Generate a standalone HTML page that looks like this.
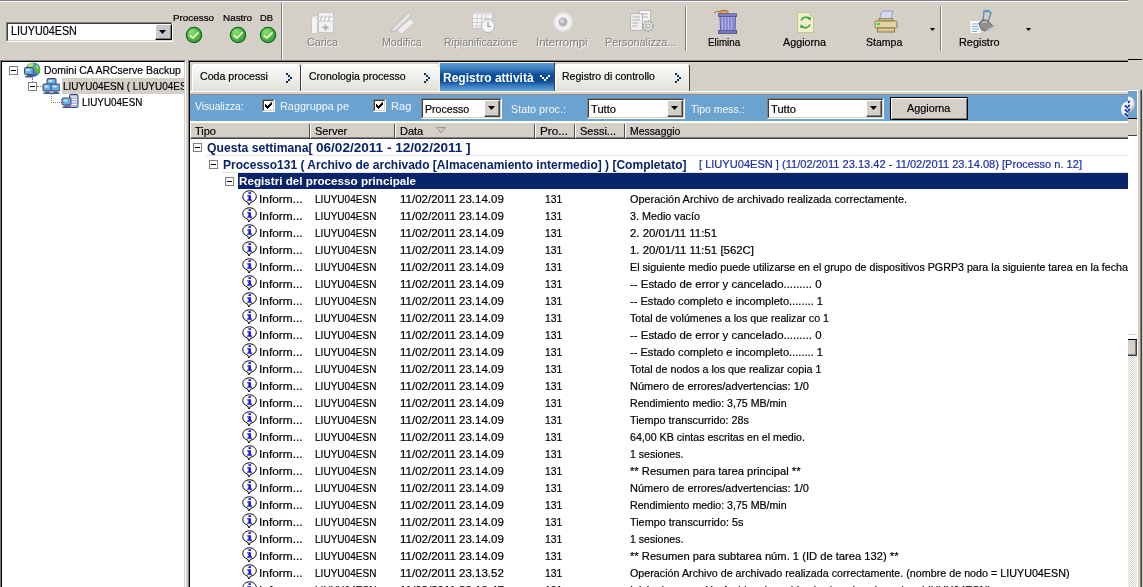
<!DOCTYPE html>
<html><head><meta charset="utf-8"><style>
html,body{margin:0;padding:0;}
body{width:1143px;height:587px;overflow:hidden;position:relative;background:#D4D0C8;font-family:'Liberation Sans', sans-serif;white-space:nowrap;}
div{box-sizing:border-box;}
.dis{color:#808080;text-shadow:1px 1px 0 #fff;}
.n{-webkit-text-stroke-width:0.2px;}
</style></head><body><div style="position:absolute;left:0;top:0;width:1143px;height:587px;will-change:transform">
<div style="position:absolute;left:0px;top:0px;width:1128px;height:1px;background:#808080"></div>
<div style="position:absolute;left:0px;top:1px;width:1128px;height:1px;background:#fff"></div>
<div style="position:absolute;left:6px;top:22px;width:167px;height:20px;border-top:1px solid #808080;border-left:1px solid #808080;border-right:1px solid #fff;border-bottom:1px solid #fff"></div>
<div style="position:absolute;left:7px;top:23px;width:165px;height:18px;border-top:1px solid #404040;border-left:1px solid #404040;border-right:1px solid #D4D0C8;border-bottom:1px solid #D4D0C8;background:#fff"></div>
<div class="n" style="position:absolute;left:11px;top:25px;font-size:12px;line-height:12px;font-weight:normal;color:#000;transform:scaleX(0.8981);transform-origin:0 0;">LIUYU04ESN</div>
<div style="position:absolute;left:155px;top:24px;width:17px;height:16px;background:#C8C8C8;border-top:1px solid #fff;border-left:1px solid #fff;border-right:1px solid #000;border-bottom:1px solid #000;box-shadow:inset -1px -1px 0 #808080"></div>
<svg style="position:absolute;left:159px;top:30px" width="8" height="5"><path d="M0 0H7L3.5 4Z" fill="#000"/></svg>
<div class="n" style="position:absolute;left:173px;top:14px;font-size:9px;line-height:9px;font-weight:normal;color:#000;transform:scaleX(1.0950);transform-origin:0 0;">Processo</div>
<div class="n" style="position:absolute;left:223px;top:14px;font-size:9px;line-height:9px;font-weight:normal;color:#000;transform:scaleX(1.0974);transform-origin:0 0;">Nastro</div>
<div class="n" style="position:absolute;left:260px;top:14px;font-size:9px;line-height:9px;font-weight:normal;color:#000;transform:scaleX(1.0421);transform-origin:0 0;">DB</div>
<svg style="position:absolute;left:185px;top:26px" width="18" height="18" viewBox="0 0 18 18">
<defs><radialGradient id="g194" cx="35%" cy="30%" r="75%"><stop offset="0" stop-color="#8EE070"/><stop offset="0.6" stop-color="#58B848"/><stop offset="1" stop-color="#3A9A38"/></radialGradient></defs>
<circle cx="9" cy="9" r="7.6" fill="url(#g194)" stroke="#0E6A24" stroke-width="1.3"/>
<path d="M5.2 9.6L8 12L13 6.8" fill="none" stroke="#F4FFD8" stroke-width="1.7" stroke-linecap="round" stroke-linejoin="round"/></svg>
<svg style="position:absolute;left:229px;top:26px" width="18" height="18" viewBox="0 0 18 18">
<defs><radialGradient id="g238" cx="35%" cy="30%" r="75%"><stop offset="0" stop-color="#8EE070"/><stop offset="0.6" stop-color="#58B848"/><stop offset="1" stop-color="#3A9A38"/></radialGradient></defs>
<circle cx="9" cy="9" r="7.6" fill="url(#g238)" stroke="#0E6A24" stroke-width="1.3"/>
<path d="M5.2 9.6L8 12L13 6.8" fill="none" stroke="#F4FFD8" stroke-width="1.7" stroke-linecap="round" stroke-linejoin="round"/></svg>
<svg style="position:absolute;left:259px;top:26px" width="18" height="18" viewBox="0 0 18 18">
<defs><radialGradient id="g268" cx="35%" cy="30%" r="75%"><stop offset="0" stop-color="#8EE070"/><stop offset="0.6" stop-color="#58B848"/><stop offset="1" stop-color="#3A9A38"/></radialGradient></defs>
<circle cx="9" cy="9" r="7.6" fill="url(#g268)" stroke="#0E6A24" stroke-width="1.3"/>
<path d="M5.2 9.6L8 12L13 6.8" fill="none" stroke="#F4FFD8" stroke-width="1.7" stroke-linecap="round" stroke-linejoin="round"/></svg>
<div style="position:absolute;left:281px;top:2px;width:1px;height:58px;background:#808080"></div>
<div style="position:absolute;left:282px;top:2px;width:1px;height:58px;background:#fff"></div>
<div style="position:absolute;left:685px;top:6px;width:1px;height:45px;background:#808080"></div>
<div style="position:absolute;left:686px;top:6px;width:1px;height:45px;background:#fff"></div>
<div style="position:absolute;left:940px;top:6px;width:1px;height:45px;background:#808080"></div>
<div style="position:absolute;left:941px;top:6px;width:1px;height:45px;background:#fff"></div>
<div class="dis" style="position:absolute;left:307px;top:37px;font-size:11px;line-height:11px;font-weight:normal;transform:scaleX(0.9741);transform-origin:0 0;">Carica</div>
<div class="dis" style="position:absolute;left:382px;top:37px;font-size:11px;line-height:11px;font-weight:normal;transform:scaleX(0.9683);transform-origin:0 0;">Modifica</div>
<div class="dis" style="position:absolute;left:444px;top:37px;font-size:11px;line-height:11px;font-weight:normal;transform:scaleX(0.9573);transform-origin:0 0;">Ripianificazione</div>
<div class="dis" style="position:absolute;left:536px;top:37px;font-size:11px;line-height:11px;font-weight:normal;transform:scaleX(1.0426);transform-origin:0 0;">Interrompi</div>
<div class="dis" style="position:absolute;left:605px;top:37px;font-size:11px;line-height:11px;font-weight:normal;transform:scaleX(0.9908);transform-origin:0 0;">Personalizza...</div>
<div class="n" style="position:absolute;left:708px;top:37px;font-size:11px;line-height:11px;font-weight:normal;color:#000;transform:scaleX(0.8923);transform-origin:0 0;">Elimina</div>
<div class="n" style="position:absolute;left:783px;top:37px;font-size:11px;line-height:11px;font-weight:normal;color:#000;transform:scaleX(0.9780);transform-origin:0 0;">Aggiorna</div>
<div class="n" style="position:absolute;left:866px;top:37px;font-size:11px;line-height:11px;font-weight:normal;color:#000;transform:scaleX(0.9561);transform-origin:0 0;">Stampa</div>
<div class="n" style="position:absolute;left:959px;top:37px;font-size:11px;line-height:11px;font-weight:normal;color:#000;transform:scaleX(0.9908);transform-origin:0 0;">Registro</div>
<svg style="position:absolute;left:930px;top:28px" width="6" height="4"><path d="M0 0H5L2.5 3Z" fill="#000"/></svg>
<svg style="position:absolute;left:1026px;top:28px" width="6" height="4"><path d="M0 0H5L2.5 3Z" fill="#000"/></svg>
<svg style="position:absolute;left:310px;top:11px" width="26" height="24" viewBox="0 0 26 24">
<rect x="1.5" y="5" width="6" height="17.5" rx="1" fill="#F4F4F4" stroke="#C8C8C8"/>
<rect x="1.5" y="5" width="6" height="2" fill="#E0E0E0"/>
<rect x="8.5" y="1.5" width="15" height="20" fill="#F0F0F0" stroke="#C8C8C8"/>
<rect x="8.5" y="6" width="15" height="4" fill="#fff" stroke="#C8C8C8"/>
<path d="M10 10L12 6M14 10L16 6M18 10L20 6" stroke="#C0C0C0" stroke-width="1.3"/>
<path d="M15.5 13.5V19.5M12.5 16.5H18.5" stroke="#B0B0B0" stroke-width="1.8"/></svg>
<svg style="position:absolute;left:390px;top:10px" width="27" height="24" viewBox="0 0 27 24">
<path d="M2 19L17 3.5Q19 1.5 20.5 3L21 3.5Q22 5 20.5 6.5L5 21.5L1.5 22Z" fill="#E4E4E4" stroke="#B4B4B4"/>
<path d="M7.5 20L20 8.5L24.5 12.5L12 24" fill="#EDEDED" stroke="#C8C8C8"/></svg>
<svg style="position:absolute;left:471px;top:9px" width="25" height="25" viewBox="0 0 25 25">
<rect x="1.5" y="2.5" width="20" height="17" fill="#F4F4F4" stroke="#C4C4C4"/>
<rect x="1.5" y="2.5" width="20" height="3" fill="#D8D8D8"/>
<path d="M1.5 9.5H21.5M1.5 13.5H21.5M1.5 17H21.5M6 5.5V19.5M10.5 5.5V19.5M15 5.5V19.5" stroke="#D0D0D0"/>
<circle cx="17" cy="17" r="6.5" fill="#F6F6F6" stroke="#B8B8B8"/>
<path d="M17 13V17.5H20" fill="none" stroke="#909090" stroke-width="1.2"/></svg>
<svg style="position:absolute;left:552px;top:11px" width="22" height="22" viewBox="0 0 22 22">
<circle cx="11" cy="11" r="10" fill="#E6E6E6"/><circle cx="11" cy="11" r="9" fill="#F2F2F2" stroke="#DADADA"/>
<circle cx="11" cy="11" r="4.5" fill="#B8B8B8"/><circle cx="10" cy="10" r="2" fill="#D8D8D8"/></svg>
<svg style="position:absolute;left:629px;top:9px" width="27" height="25" viewBox="0 0 27 25">
<rect x="10.5" y="1.5" width="11" height="18" fill="#F4F4F4" stroke="#C0C0C0"/>
<rect x="1.5" y="4.5" width="12" height="17" fill="#EEEEEE" stroke="#B8B8B8"/>
<path d="M3.5 8H11M3.5 11H11M3.5 14H9M3.5 17H8M13 5H19M13 8H19" stroke="#B0B0B0"/>
<circle cx="19" cy="17" r="5" fill="#E0E0E0" stroke="#A8A8A8" stroke-width="2" stroke-dasharray="2 1.2"/>
<circle cx="19" cy="17" r="2" fill="#F4F4F4" stroke="#A0A0A0"/></svg>
<svg style="position:absolute;left:712px;top:9px" width="28" height="26" viewBox="0 0 28 26">
<path d="M2 4Q4 2 8 2.5" fill="none" stroke="#A07040" stroke-width="1"/>
<ellipse cx="12" cy="3.5" rx="4.2" ry="2.2" fill="#E0A050" stroke="#A06828"/>
<rect x="6.5" y="4.8" width="18" height="2.6" fill="#8888C8" stroke="#5A5A98"/>
<path d="M8 7.5H23.5L23 22H8.5Z" fill="#9898E0" stroke="#5A5A98"/>
<path d="M11 9V21M14 9V21M17 9V21M20 9V21" stroke="#C8C8F4" stroke-width="1"/>
<path d="M11.8 9V21M14.8 9V21M17.8 9V21M20.8 9V21" stroke="#6464A8" stroke-width="0.8"/>
<rect x="6.5" y="21.5" width="18" height="3" fill="#7878B8" stroke="#5A5A98"/></svg>
<svg style="position:absolute;left:797px;top:12px" width="18" height="21" viewBox="0 0 18 21">
<path d="M0.5 0.5H13L16.5 4V20.5H0.5Z" fill="#F2F0C8" stroke="#C8C498"/>
<path d="M13 0.5V4H16.5" fill="#E4E0B0" stroke="#C8C498"/>
<path d="M4 8.5A5 5 0 0 1 12.5 7" fill="none" stroke="#3AAA4A" stroke-width="1.8"/>
<path d="M10.5 5L14 5.5L13 9Z" fill="#2A9A3A"/>
<path d="M13 12.5A5 5 0 0 1 4.5 14" fill="none" stroke="#3AAA4A" stroke-width="1.8"/>
<path d="M6.5 16L3 15.5L4 12Z" fill="#2A9A3A"/></svg>
<svg style="position:absolute;left:874px;top:10px" width="24" height="23" viewBox="0 0 24 23">
<path d="M5.5 11L7 3Q8 1 10 1H19L17 9Z" fill="#D8D8F0" stroke="#8C8CA8" stroke-width="0.8"/>
<path d="M5 8.5H19V11H5Z" fill="#C8B888" stroke="#8C7850" stroke-width="0.8"/>
<rect x="1" y="11" width="22" height="7" rx="1" fill="#E0D4A0" stroke="#8C7850"/>
<rect x="3" y="13" width="3" height="2" fill="#40D040"/>
<rect x="3.5" y="18" width="17" height="4" fill="#D8C890" stroke="#8C7850"/></svg>
<svg style="position:absolute;left:970px;top:9px" width="26" height="25" viewBox="0 0 26 25">
<rect x="0.5" y="12" width="10" height="12" fill="#fff"/>
<path d="M2 15H9M2 17.5H8M2 20H9M2 22.5H7" stroke="#70A8E0" stroke-width="1"/>
<path d="M14 2L18 1.5L21 4L17 15L13 13Z" fill="none" stroke="#6E8CA8" stroke-width="1.5"/>
<path d="M15.5 2.5L19.5 2" stroke="#3A9AF0" stroke-width="2"/>
<path d="M9 14Q12 10 16 11L20 14L23 17L15 22Q11 21 10 18Z" fill="#909090" stroke="#505050" stroke-width="0.8"/>
<path d="M12 14Q14 12 17 13" stroke="#D0D0D0" stroke-width="1.2" fill="none"/>
<path d="M16 21L24 16L25 17.5L17 22Z" fill="#B8B8B8"/></svg>
<div style="position:absolute;left:0px;top:60px;width:186px;height:540px;background:#fff;border-top:1px solid #808080;border-left:1px solid #808080;border-right:1px solid #fff"></div>
<div style="position:absolute;left:1px;top:61px;width:184px;height:540px;border-top:1px solid #000;border-left:1px solid #000;border-right:1px solid #D4D0C8"></div>
<div style="position:absolute;left:9px;top:66px;width:9px;height:9px;border:1px solid #808080;background:#fff"></div>
<div style="position:absolute;left:11px;top:70px;width:5px;height:1px;background:#000"></div>
<div style="position:absolute;left:28px;top:82px;width:9px;height:9px;border:1px solid #808080;background:#fff"></div>
<div style="position:absolute;left:30px;top:86px;width:5px;height:1px;background:#000"></div>
<div style="position:absolute;left:32px;top:78px;width:1px;height:4px;border-left:1px dotted #808080"></div>
<div style="position:absolute;left:37px;top:86px;width:6px;height:1px;border-top:1px dotted #808080"></div>
<div style="position:absolute;left:51px;top:94px;width:1px;height:9px;border-left:1px dotted #808080"></div>
<div style="position:absolute;left:51px;top:102px;width:11px;height:1px;border-top:1px dotted #808080"></div>
<div style="position:absolute;left:62px;top:78px;width:122px;height:16px;background:#D4D0C8"></div>
<svg style="position:absolute;left:23px;top:61px" width="18" height="18" viewBox="0 0 18 18">
<defs><radialGradient id="glb" cx="45%" cy="40%" r="65%"><stop offset="0" stop-color="#6ABCF0"/><stop offset="0.7" stop-color="#2A78C8"/><stop offset="1" stop-color="#164C98"/></radialGradient></defs>
<circle cx="10" cy="8.7" r="7.3" fill="url(#glb)"/>
<path d="M4.5 4Q7 1.3 10.5 1.6Q11.5 3.5 9.5 5.5Q8 6.5 5 6.5Z" fill="#A8E060"/>
<path d="M12.5 2.5Q16.5 4.5 17 9Q16.5 12.5 14 14Q13 11 12 9.5Q11.5 6 12.5 2.5Z" fill="#58B838"/>
<path d="M13.5 4.5Q15 6 14.5 8" stroke="#B8F080" stroke-width="1.2" fill="none"/>
<rect x="1.5" y="6.5" width="9" height="7" rx="1" fill="#8A96C0" stroke="#3C4A7C"/><rect x="3" y="8" width="6" height="4" fill="#52B8F0"/><rect x="3" y="8" width="4" height="2" fill="#B8ECFF"/><path d="M4 14H8V15H10V16.5H2V15H4Z" fill="#4A5888"/></svg>
<svg style="position:absolute;left:42px;top:77px" width="18" height="18" viewBox="0 0 18 18"><rect x="5.0" y="1.5" width="9" height="7" rx="1" fill="#8A96C0" stroke="#3C4A7C"/><rect x="6.5" y="3" width="6" height="4" fill="#52B8F0"/><rect x="6.5" y="3" width="4" height="2" fill="#B8ECFF"/><path d="M7.5 9H11.5V10H13.5V11.5H5.5V10H7.5Z" fill="#4A5888"/><rect x="1.0" y="7.0" width="9" height="7" rx="1" fill="#8A96C0" stroke="#3C4A7C"/><rect x="2.5" y="8.5" width="6" height="4" fill="#52B8F0"/><rect x="2.5" y="8.5" width="4" height="2" fill="#B8ECFF"/><path d="M3.5 14.5H7.5V15.5H9.5V17.0H1.5V15.5H3.5Z" fill="#4A5888"/><rect x="9.0" y="7.0" width="9" height="7" rx="1" fill="#8A96C0" stroke="#3C4A7C"/><rect x="10.5" y="8.5" width="6" height="4" fill="#52B8F0"/><rect x="10.5" y="8.5" width="4" height="2" fill="#B8ECFF"/><path d="M11.5 14.5H15.5V15.5H17.5V17.0H9.5V15.5H11.5Z" fill="#4A5888"/></svg>
<svg style="position:absolute;left:61px;top:94px" width="18" height="16" viewBox="0 0 18 16">
<rect x="8.5" y="0.5" width="8.5" height="13" rx="1" fill="#A8B4D8" stroke="#3C4A7C"/>
<path d="M10 3H16M10 5.5H16M10 8H16M10 10.5H16" stroke="#fff" stroke-width="1.2"/>
<rect x="1.0" y="4.0" width="9" height="7" rx="1" fill="#8A96C0" stroke="#3C4A7C"/><rect x="2.5" y="5.5" width="6" height="4" fill="#52B8F0"/><rect x="2.5" y="5.5" width="4" height="2" fill="#B8ECFF"/><path d="M3.5 11.5H7.5V12.5H9.5V14.0H1.5V12.5H3.5Z" fill="#4A5888"/></svg>
<div class="n" style="position:absolute;left:44px;top:65px;font-size:11px;line-height:11px;font-weight:normal;color:#000;transform:scaleX(0.9478);transform-origin:0 0;">Domini CA ARCserve Backup</div>
<div style="position:absolute;left:0;top:0;width:184px;height:587px;overflow:hidden">
<div class="n" style="position:absolute;left:63px;top:81px;font-size:11px;line-height:11px;font-weight:normal;color:#000;transform:scaleX(0.9067);transform-origin:0 0;">LIUYU04ESN ( LIUYU04ESN )</div>
</div>
<div class="n" style="position:absolute;left:82px;top:97px;font-size:11px;line-height:11px;font-weight:normal;color:#000;transform:scaleX(0.8979);transform-origin:0 0;">LIUYU04ESN</div>
<div style="position:absolute;left:188px;top:60px;width:940px;height:540px;border-top:1px solid #808080;border-left:1px solid #808080"></div>
<div style="position:absolute;left:189px;top:61px;width:939px;height:540px;border-top:1px solid #000;border-left:1px solid #000"></div>
<div style="position:absolute;left:192px;top:64px;width:109px;height:28px;background:linear-gradient(#FAFAF8,#F2F1EE 40%,#E2DFD8);border-top:1px solid #fff;border-left:1px solid #fff;border-right:1px solid #404040;border-radius:3px 3px 0 0"></div>
<div class="n" style="position:absolute;left:200px;top:71px;font-size:11px;line-height:11px;font-weight:normal;color:#000;transform:scaleX(0.9664);transform-origin:0 0;">Coda processi</div>
<svg style="position:absolute;left:286px;top:73px" width="6" height="10" shape-rendering="crispEdges"><path d="M0 0h2v2h-2zM2 2h2v2h-2zM4 4h2v2h-2zM2 6h2v2h-2zM0 8h2v2h-2z" fill="#0A3060"/></svg>
<div style="position:absolute;left:301px;top:64px;width:139px;height:28px;background:linear-gradient(#FAFAF8,#F2F1EE 40%,#E2DFD8);border-top:1px solid #fff;border-left:1px solid #fff;border-right:1px solid #404040;border-radius:3px 3px 0 0"></div>
<div class="n" style="position:absolute;left:309px;top:71px;font-size:11px;line-height:11px;font-weight:normal;color:#000;transform:scaleX(0.9570);transform-origin:0 0;">Cronologia processo</div>
<svg style="position:absolute;left:424px;top:73px" width="6" height="10" shape-rendering="crispEdges"><path d="M0 0h2v2h-2zM2 2h2v2h-2zM4 4h2v2h-2zM2 6h2v2h-2zM0 8h2v2h-2z" fill="#0A3060"/></svg>
<div style="position:absolute;left:555px;top:64px;width:135px;height:28px;background:linear-gradient(#FAFAF8,#F2F1EE 40%,#E2DFD8);border-top:1px solid #fff;border-left:1px solid #fff;border-right:1px solid #404040;border-radius:3px 3px 0 0"></div>
<div class="n" style="position:absolute;left:562px;top:71px;font-size:11px;line-height:11px;font-weight:normal;color:#000;transform:scaleX(0.9562);transform-origin:0 0;">Registro di controllo</div>
<svg style="position:absolute;left:675px;top:73px" width="6" height="10" shape-rendering="crispEdges"><path d="M0 0h2v2h-2zM2 2h2v2h-2zM4 4h2v2h-2zM2 6h2v2h-2zM0 8h2v2h-2z" fill="#0A3060"/></svg>
<div style="position:absolute;left:439px;top:62px;width:116px;height:30px;background:linear-gradient(#5A9AD6 0%,#3C7FC0 20%,#0B4E98 40%,#0A4A92 62%,#3A80C4 80%,#6AA8DC 100%);border-right:1px solid #404040;border-left:1px solid #F4F4F4;border-top:1px solid #F4F4F4"></div>
<div style="position:absolute;left:443px;top:72px;font-size:12px;line-height:12px;font-weight:bold;color:#fff;transform:scaleX(0.9990);transform-origin:0 0;">Registro attività</div>
<svg style="position:absolute;left:540px;top:75px" width="10" height="6" shape-rendering="crispEdges"><path d="M0 0h2v2h-2zM2 2h2v2h-2zM4 4h2v2h-2zM6 2h2v2h-2zM8 0h2v2h-2z" fill="#fff"/></svg>
<div style="position:absolute;left:190px;top:91px;width:938px;height:1px;background:#fff"></div>
<div style="position:absolute;left:190px;top:94px;width:938px;height:1px;background:#8C8C8C"></div>
<div style="position:absolute;left:190px;top:95px;width:938px;height:26px;background:#6BA3D0"></div>
<div style="position:absolute;left:195px;top:101px;font-size:11px;line-height:11px;font-weight:normal;color:#F4F8FC;transform:scaleX(0.9282);transform-origin:0 0;">Visualizza:</div>
<div style="position:absolute;left:262px;top:99px;width:13px;height:13px;background:#fff;border-top:1px solid #808080;border-left:1px solid #808080;border-right:1px solid #fff;border-bottom:1px solid #fff"></div>
<div style="position:absolute;left:263px;top:100px;width:11px;height:11px;border-top:1px solid #404040;border-left:1px solid #404040;border-right:1px solid #D4D0C8;border-bottom:1px solid #D4D0C8"></div>
<svg style="position:absolute;left:265px;top:102px" width="7" height="7" shape-rendering="crispEdges"><path d="M6 0h1v1h-1zM5 1h2v1h-2zM0 2h1v1h-1zM4 2h3v1h-3zM0 3h2v1h-2zM3 3h3v1h-3zM0 4h5v1h-5zM1 5h3v1h-3zM2 6h1v1h-1z" fill="#000"/></svg>
<div style="position:absolute;left:280px;top:101px;font-size:11px;line-height:11px;font-weight:normal;color:#F4F8FC;transform:scaleX(0.9893);transform-origin:0 0;">Raggruppa pe</div>
<div style="position:absolute;left:373px;top:99px;width:13px;height:13px;background:#fff;border-top:1px solid #808080;border-left:1px solid #808080;border-right:1px solid #fff;border-bottom:1px solid #fff"></div>
<div style="position:absolute;left:374px;top:100px;width:11px;height:11px;border-top:1px solid #404040;border-left:1px solid #404040;border-right:1px solid #D4D0C8;border-bottom:1px solid #D4D0C8"></div>
<svg style="position:absolute;left:376px;top:102px" width="7" height="7" shape-rendering="crispEdges"><path d="M6 0h1v1h-1zM5 1h2v1h-2zM0 2h1v1h-1zM4 2h3v1h-3zM0 3h2v1h-2zM3 3h3v1h-3zM0 4h5v1h-5zM1 5h3v1h-3zM2 6h1v1h-1z" fill="#000"/></svg>
<div style="position:absolute;left:391px;top:101px;font-size:11px;line-height:11px;font-weight:normal;color:#F4F8FC;transform:scaleX(1.0163);transform-origin:0 0;">Rag</div>
<div style="position:absolute;left:421px;top:98px;width:81px;height:21px;background:#fff;border-top:1px solid #808080;border-left:1px solid #808080;border-right:1px solid #fff;border-bottom:1px solid #fff"></div>
<div style="position:absolute;left:422px;top:99px;width:79px;height:19px;border-top:1px solid #404040;border-left:1px solid #404040;border-right:1px solid #D4D0C8;border-bottom:1px solid #D4D0C8"></div>
<div style="position:absolute;left:484px;top:100px;width:16px;height:17px;background:#D4D0C8;border-top:1px solid #fff;border-left:1px solid #fff;border-right:1px solid #404040;border-bottom:1px solid #404040;box-shadow:inset -1px -1px 0 #808080"></div>
<svg style="position:absolute;left:488px;top:106px" width="8" height="5"><path d="M0 0H7L3.5 4Z" fill="#000"/></svg>
<div class="n" style="position:absolute;left:425px;top:104px;font-size:11px;line-height:11px;font-weight:normal;color:#000;transform:scaleX(0.9652);transform-origin:0 0;">Processo</div>
<div style="position:absolute;left:511px;top:104px;font-size:11px;line-height:11px;font-weight:normal;color:#F4F8FC;transform:scaleX(0.9771);transform-origin:0 0;">Stato proc.:</div>
<div style="position:absolute;left:587px;top:98px;width:98px;height:21px;background:#fff;border-top:1px solid #808080;border-left:1px solid #808080;border-right:1px solid #fff;border-bottom:1px solid #fff"></div>
<div style="position:absolute;left:588px;top:99px;width:96px;height:19px;border-top:1px solid #404040;border-left:1px solid #404040;border-right:1px solid #D4D0C8;border-bottom:1px solid #D4D0C8"></div>
<div style="position:absolute;left:667px;top:100px;width:16px;height:17px;background:#D4D0C8;border-top:1px solid #fff;border-left:1px solid #fff;border-right:1px solid #404040;border-bottom:1px solid #404040;box-shadow:inset -1px -1px 0 #808080"></div>
<svg style="position:absolute;left:671px;top:106px" width="8" height="5"><path d="M0 0H7L3.5 4Z" fill="#000"/></svg>
<div class="n" style="position:absolute;left:591px;top:104px;font-size:11px;line-height:11px;font-weight:normal;color:#000;transform:scaleX(1.0139);transform-origin:0 0;">Tutto</div>
<div style="position:absolute;left:691px;top:104px;font-size:11px;line-height:11px;font-weight:normal;color:#F4F8FC;transform:scaleX(0.9485);transform-origin:0 0;">Tipo mess.:</div>
<div style="position:absolute;left:767px;top:98px;width:117px;height:21px;background:#fff;border-top:1px solid #808080;border-left:1px solid #808080;border-right:1px solid #fff;border-bottom:1px solid #fff"></div>
<div style="position:absolute;left:768px;top:99px;width:115px;height:19px;border-top:1px solid #404040;border-left:1px solid #404040;border-right:1px solid #D4D0C8;border-bottom:1px solid #D4D0C8"></div>
<div style="position:absolute;left:866px;top:100px;width:16px;height:17px;background:#D4D0C8;border-top:1px solid #fff;border-left:1px solid #fff;border-right:1px solid #404040;border-bottom:1px solid #404040;box-shadow:inset -1px -1px 0 #808080"></div>
<svg style="position:absolute;left:870px;top:106px" width="8" height="5"><path d="M0 0H7L3.5 4Z" fill="#000"/></svg>
<div class="n" style="position:absolute;left:771px;top:104px;font-size:11px;line-height:11px;font-weight:normal;color:#000;transform:scaleX(1.0139);transform-origin:0 0;">Tutto</div>
<div style="position:absolute;left:890px;top:97px;width:78px;height:23px;background:#D4D0C8;border:1px solid #000;box-shadow:inset 1px 1px 0 #fff,inset -1px -1px 0 #808080"></div>
<div class="n" style="position:absolute;left:907px;top:103px;font-size:11px;line-height:11px;font-weight:normal;color:#000;transform:scaleX(0.9850);transform-origin:0 0;">Aggiorna</div>
<div style="position:absolute;left:190px;top:121px;width:938px;height:2px;background:#fff"></div>
<div style="position:absolute;left:190px;top:123px;width:938px;height:16px;background:#D4D0C8;border-bottom:1px solid #404040;border-left:1px solid #fff;box-shadow:inset 0 -1px 0 #808080"></div>
<div style="position:absolute;left:309px;top:124px;width:1px;height:14px;background:#505050"></div>
<div style="position:absolute;left:310px;top:124px;width:1px;height:14px;background:#fff"></div>
<div style="position:absolute;left:394px;top:124px;width:1px;height:14px;background:#505050"></div>
<div style="position:absolute;left:395px;top:124px;width:1px;height:14px;background:#fff"></div>
<div style="position:absolute;left:534px;top:124px;width:1px;height:14px;background:#505050"></div>
<div style="position:absolute;left:535px;top:124px;width:1px;height:14px;background:#fff"></div>
<div style="position:absolute;left:574px;top:124px;width:1px;height:14px;background:#505050"></div>
<div style="position:absolute;left:575px;top:124px;width:1px;height:14px;background:#fff"></div>
<div style="position:absolute;left:624px;top:124px;width:1px;height:14px;background:#505050"></div>
<div style="position:absolute;left:625px;top:124px;width:1px;height:14px;background:#fff"></div>
<div class="n" style="position:absolute;left:195px;top:126px;font-size:11px;line-height:11px;font-weight:normal;color:#000;transform:scaleX(1.0000);transform-origin:0 0;">Tipo</div>
<div class="n" style="position:absolute;left:315px;top:126px;font-size:11px;line-height:11px;font-weight:normal;color:#000;transform:scaleX(0.9934);transform-origin:0 0;">Server</div>
<div class="n" style="position:absolute;left:400px;top:126px;font-size:11px;line-height:11px;font-weight:normal;color:#000;transform:scaleX(0.9978);transform-origin:0 0;">Data</div>
<svg style="position:absolute;left:436px;top:127px" width="10" height="7"><path d="M0.5 0.5H9.5L5 6Z" fill="#C4C4C4" stroke="#8C8C8C" stroke-width="0.8"/></svg>
<div class="n" style="position:absolute;left:540px;top:126px;font-size:11px;line-height:11px;font-weight:normal;color:#000;transform:scaleX(1.0673);transform-origin:0 0;">Pro...</div>
<div class="n" style="position:absolute;left:580px;top:126px;font-size:11px;line-height:11px;font-weight:normal;color:#000;transform:scaleX(0.9978);transform-origin:0 0;">Sessi...</div>
<div class="n" style="position:absolute;left:630px;top:126px;font-size:11px;line-height:11px;font-weight:normal;color:#000;transform:scaleX(0.9463);transform-origin:0 0;">Messaggio</div>
<div style="position:absolute;left:190px;top:139px;width:938px;height:460px;background:#fff"></div>
<div style="position:absolute;left:193px;top:143px;width:9px;height:9px;border:1px solid #808080;background:#fff"></div>
<div style="position:absolute;left:195px;top:147px;width:5px;height:1px;background:#000"></div>
<div style="position:absolute;left:207px;top:142px;font-size:12px;line-height:12px;font-weight:bold;color:#0A246A;transform:scaleX(1.0141);transform-origin:0 0;">Questa settimana[</div>
<div style="position:absolute;left:316px;top:142px;font-size:12px;line-height:12px;font-weight:bold;color:#0A246A;transform:scaleX(1.1304);transform-origin:0 0;">06/02/2011 - 12/02/2011 ]</div>
<div style="position:absolute;left:206px;top:155px;width:922px;height:1px;background:#E4E4E4"></div>
<div style="position:absolute;left:209px;top:160px;width:9px;height:9px;border:1px solid #808080;background:#fff"></div>
<div style="position:absolute;left:211px;top:164px;width:5px;height:1px;background:#000"></div>
<div style="position:absolute;left:223px;top:159px;font-size:12px;line-height:12px;font-weight:bold;color:#0A246A;transform:scaleX(1.0011);transform-origin:0 0;">Processo131 ( Archivo de archivado [Almacenamiento intermedio] ) [Completato]</div>
<div class="n" style="position:absolute;left:699px;top:159px;font-size:11px;line-height:11px;font-weight:normal;color:#1A2EA8;transform:scaleX(1.0058);transform-origin:0 0;">[ LIUYU04ESN ] (11/02/2011 23.13.42 - 11/02/2011 23.14.08) [Processo n. 12]</div>
<div style="position:absolute;left:222px;top:172px;width:906px;height:1px;background:#E4E4E4"></div>
<div style="position:absolute;left:225px;top:177px;width:9px;height:9px;border:1px solid #808080;background:#fff"></div>
<div style="position:absolute;left:227px;top:181px;width:5px;height:1px;background:#000"></div>
<div style="position:absolute;left:238px;top:173px;width:890px;height:16px;background:#0A246A"></div>
<div style="position:absolute;left:239px;top:176px;font-size:11px;line-height:11px;font-weight:bold;color:#fff;transform:scaleX(1.0609);transform-origin:0 0;">Registri del processo principale</div>
<div style="position:absolute;left:0;top:0;width:1128px;height:587px;overflow:hidden">
<svg style="position:absolute;left:242px;top:190px" width="16" height="16" viewBox="0 0 16 16">
<path d="M7.5 0.8C3.8 0.8 0.8 3.3 0.8 6.6C0.8 9.3 2.8 11.3 5.5 12L7 15L8.6 12.2C11.9 11.8 14.3 9.5 14.3 6.6C14.3 3.3 11.3 0.8 7.5 0.8Z" fill="#fff" stroke="#000" stroke-width="1"/>
<rect x="6.5" y="2.2" width="2.4" height="1.8" fill="#1010F0"/>
<path d="M5.2 5.2H8.9V9.6H10V10.8H5.2V9.6H6.4V6.4H5.2Z" fill="#1010F0"/></svg>
<div class="n" style="position:absolute;left:259px;top:194px;font-size:11px;line-height:11px;font-weight:normal;color:#000;transform:scaleX(1.0802);transform-origin:0 0;">Inform...</div>
<div class="n" style="position:absolute;left:315px;top:194px;font-size:11px;line-height:11px;font-weight:normal;color:#000;transform:scaleX(0.9130);transform-origin:0 0;">LIUYU04ESN</div>
<div class="n" style="position:absolute;left:400px;top:194px;font-size:11px;line-height:11px;font-weight:normal;color:#000;transform:scaleX(1.0458);transform-origin:0 0;">11/02/2011 23.14.09</div>
<div class="n" style="position:absolute;left:545px;top:194px;font-size:11px;line-height:11px;font-weight:normal;color:#000;transform:scaleX(0.9447);transform-origin:0 0;">131</div>
<div class="n" style="position:absolute;left:630px;top:194px;font-size:11px;line-height:11px;font-weight:normal;color:#000;transform:scaleX(0.9891);transform-origin:0 0;">Operación Archivo de archivado realizada correctamente.</div>
<svg style="position:absolute;left:242px;top:207px" width="16" height="16" viewBox="0 0 16 16">
<path d="M7.5 0.8C3.8 0.8 0.8 3.3 0.8 6.6C0.8 9.3 2.8 11.3 5.5 12L7 15L8.6 12.2C11.9 11.8 14.3 9.5 14.3 6.6C14.3 3.3 11.3 0.8 7.5 0.8Z" fill="#fff" stroke="#000" stroke-width="1"/>
<rect x="6.5" y="2.2" width="2.4" height="1.8" fill="#1010F0"/>
<path d="M5.2 5.2H8.9V9.6H10V10.8H5.2V9.6H6.4V6.4H5.2Z" fill="#1010F0"/></svg>
<div class="n" style="position:absolute;left:259px;top:211px;font-size:11px;line-height:11px;font-weight:normal;color:#000;transform:scaleX(1.0802);transform-origin:0 0;">Inform...</div>
<div class="n" style="position:absolute;left:315px;top:211px;font-size:11px;line-height:11px;font-weight:normal;color:#000;transform:scaleX(0.9130);transform-origin:0 0;">LIUYU04ESN</div>
<div class="n" style="position:absolute;left:400px;top:211px;font-size:11px;line-height:11px;font-weight:normal;color:#000;transform:scaleX(1.0458);transform-origin:0 0;">11/02/2011 23.14.09</div>
<div class="n" style="position:absolute;left:545px;top:211px;font-size:11px;line-height:11px;font-weight:normal;color:#000;transform:scaleX(0.9447);transform-origin:0 0;">131</div>
<div class="n" style="position:absolute;left:630px;top:211px;font-size:11px;line-height:11px;font-weight:normal;color:#000;transform:scaleX(0.9781);transform-origin:0 0;">3. Medio vacío</div>
<svg style="position:absolute;left:242px;top:224px" width="16" height="16" viewBox="0 0 16 16">
<path d="M7.5 0.8C3.8 0.8 0.8 3.3 0.8 6.6C0.8 9.3 2.8 11.3 5.5 12L7 15L8.6 12.2C11.9 11.8 14.3 9.5 14.3 6.6C14.3 3.3 11.3 0.8 7.5 0.8Z" fill="#fff" stroke="#000" stroke-width="1"/>
<rect x="6.5" y="2.2" width="2.4" height="1.8" fill="#1010F0"/>
<path d="M5.2 5.2H8.9V9.6H10V10.8H5.2V9.6H6.4V6.4H5.2Z" fill="#1010F0"/></svg>
<div class="n" style="position:absolute;left:259px;top:228px;font-size:11px;line-height:11px;font-weight:normal;color:#000;transform:scaleX(1.0802);transform-origin:0 0;">Inform...</div>
<div class="n" style="position:absolute;left:315px;top:228px;font-size:11px;line-height:11px;font-weight:normal;color:#000;transform:scaleX(0.9130);transform-origin:0 0;">LIUYU04ESN</div>
<div class="n" style="position:absolute;left:400px;top:228px;font-size:11px;line-height:11px;font-weight:normal;color:#000;transform:scaleX(1.0458);transform-origin:0 0;">11/02/2011 23.14.09</div>
<div class="n" style="position:absolute;left:545px;top:228px;font-size:11px;line-height:11px;font-weight:normal;color:#000;transform:scaleX(0.9447);transform-origin:0 0;">131</div>
<div class="n" style="position:absolute;left:630px;top:228px;font-size:11px;line-height:11px;font-weight:normal;color:#000;transform:scaleX(1.0361);transform-origin:0 0;">2. 20/01/11 11:51</div>
<svg style="position:absolute;left:242px;top:241px" width="16" height="16" viewBox="0 0 16 16">
<path d="M7.5 0.8C3.8 0.8 0.8 3.3 0.8 6.6C0.8 9.3 2.8 11.3 5.5 12L7 15L8.6 12.2C11.9 11.8 14.3 9.5 14.3 6.6C14.3 3.3 11.3 0.8 7.5 0.8Z" fill="#fff" stroke="#000" stroke-width="1"/>
<rect x="6.5" y="2.2" width="2.4" height="1.8" fill="#1010F0"/>
<path d="M5.2 5.2H8.9V9.6H10V10.8H5.2V9.6H6.4V6.4H5.2Z" fill="#1010F0"/></svg>
<div class="n" style="position:absolute;left:259px;top:245px;font-size:11px;line-height:11px;font-weight:normal;color:#000;transform:scaleX(1.0802);transform-origin:0 0;">Inform...</div>
<div class="n" style="position:absolute;left:315px;top:245px;font-size:11px;line-height:11px;font-weight:normal;color:#000;transform:scaleX(0.9130);transform-origin:0 0;">LIUYU04ESN</div>
<div class="n" style="position:absolute;left:400px;top:245px;font-size:11px;line-height:11px;font-weight:normal;color:#000;transform:scaleX(1.0458);transform-origin:0 0;">11/02/2011 23.14.09</div>
<div class="n" style="position:absolute;left:545px;top:245px;font-size:11px;line-height:11px;font-weight:normal;color:#000;transform:scaleX(0.9447);transform-origin:0 0;">131</div>
<div class="n" style="position:absolute;left:630px;top:245px;font-size:11px;line-height:11px;font-weight:normal;color:#000;transform:scaleX(1.0382);transform-origin:0 0;">1. 20/01/11 11:51 [562C]</div>
<svg style="position:absolute;left:242px;top:258px" width="16" height="16" viewBox="0 0 16 16">
<path d="M7.5 0.8C3.8 0.8 0.8 3.3 0.8 6.6C0.8 9.3 2.8 11.3 5.5 12L7 15L8.6 12.2C11.9 11.8 14.3 9.5 14.3 6.6C14.3 3.3 11.3 0.8 7.5 0.8Z" fill="#fff" stroke="#000" stroke-width="1"/>
<rect x="6.5" y="2.2" width="2.4" height="1.8" fill="#1010F0"/>
<path d="M5.2 5.2H8.9V9.6H10V10.8H5.2V9.6H6.4V6.4H5.2Z" fill="#1010F0"/></svg>
<div class="n" style="position:absolute;left:259px;top:262px;font-size:11px;line-height:11px;font-weight:normal;color:#000;transform:scaleX(1.0802);transform-origin:0 0;">Inform...</div>
<div class="n" style="position:absolute;left:315px;top:262px;font-size:11px;line-height:11px;font-weight:normal;color:#000;transform:scaleX(0.9130);transform-origin:0 0;">LIUYU04ESN</div>
<div class="n" style="position:absolute;left:400px;top:262px;font-size:11px;line-height:11px;font-weight:normal;color:#000;transform:scaleX(1.0458);transform-origin:0 0;">11/02/2011 23.14.09</div>
<div class="n" style="position:absolute;left:545px;top:262px;font-size:11px;line-height:11px;font-weight:normal;color:#000;transform:scaleX(0.9447);transform-origin:0 0;">131</div>
<div class="n" style="position:absolute;left:630px;top:262px;font-size:11px;line-height:11px;font-weight:normal;color:#000;transform:scaleX(0.9718);transform-origin:0 0;">El siguiente medio puede utilizarse en el grupo de dispositivos PGRP3 para la siguiente tarea en la fecha</div>
<svg style="position:absolute;left:242px;top:275px" width="16" height="16" viewBox="0 0 16 16">
<path d="M7.5 0.8C3.8 0.8 0.8 3.3 0.8 6.6C0.8 9.3 2.8 11.3 5.5 12L7 15L8.6 12.2C11.9 11.8 14.3 9.5 14.3 6.6C14.3 3.3 11.3 0.8 7.5 0.8Z" fill="#fff" stroke="#000" stroke-width="1"/>
<rect x="6.5" y="2.2" width="2.4" height="1.8" fill="#1010F0"/>
<path d="M5.2 5.2H8.9V9.6H10V10.8H5.2V9.6H6.4V6.4H5.2Z" fill="#1010F0"/></svg>
<div class="n" style="position:absolute;left:259px;top:279px;font-size:11px;line-height:11px;font-weight:normal;color:#000;transform:scaleX(1.0802);transform-origin:0 0;">Inform...</div>
<div class="n" style="position:absolute;left:315px;top:279px;font-size:11px;line-height:11px;font-weight:normal;color:#000;transform:scaleX(0.9130);transform-origin:0 0;">LIUYU04ESN</div>
<div class="n" style="position:absolute;left:400px;top:279px;font-size:11px;line-height:11px;font-weight:normal;color:#000;transform:scaleX(1.0458);transform-origin:0 0;">11/02/2011 23.14.09</div>
<div class="n" style="position:absolute;left:545px;top:279px;font-size:11px;line-height:11px;font-weight:normal;color:#000;transform:scaleX(0.9447);transform-origin:0 0;">131</div>
<div class="n" style="position:absolute;left:630px;top:279px;font-size:11px;line-height:11px;font-weight:normal;color:#000;transform:scaleX(1.0373);transform-origin:0 0;">-- Estado de error y cancelado......... 0</div>
<svg style="position:absolute;left:242px;top:292px" width="16" height="16" viewBox="0 0 16 16">
<path d="M7.5 0.8C3.8 0.8 0.8 3.3 0.8 6.6C0.8 9.3 2.8 11.3 5.5 12L7 15L8.6 12.2C11.9 11.8 14.3 9.5 14.3 6.6C14.3 3.3 11.3 0.8 7.5 0.8Z" fill="#fff" stroke="#000" stroke-width="1"/>
<rect x="6.5" y="2.2" width="2.4" height="1.8" fill="#1010F0"/>
<path d="M5.2 5.2H8.9V9.6H10V10.8H5.2V9.6H6.4V6.4H5.2Z" fill="#1010F0"/></svg>
<div class="n" style="position:absolute;left:259px;top:296px;font-size:11px;line-height:11px;font-weight:normal;color:#000;transform:scaleX(1.0802);transform-origin:0 0;">Inform...</div>
<div class="n" style="position:absolute;left:315px;top:296px;font-size:11px;line-height:11px;font-weight:normal;color:#000;transform:scaleX(0.9130);transform-origin:0 0;">LIUYU04ESN</div>
<div class="n" style="position:absolute;left:400px;top:296px;font-size:11px;line-height:11px;font-weight:normal;color:#000;transform:scaleX(1.0458);transform-origin:0 0;">11/02/2011 23.14.09</div>
<div class="n" style="position:absolute;left:545px;top:296px;font-size:11px;line-height:11px;font-weight:normal;color:#000;transform:scaleX(0.9447);transform-origin:0 0;">131</div>
<div class="n" style="position:absolute;left:630px;top:296px;font-size:11px;line-height:11px;font-weight:normal;color:#000;transform:scaleX(1.0085);transform-origin:0 0;">-- Estado completo e incompleto........ 1</div>
<svg style="position:absolute;left:242px;top:309px" width="16" height="16" viewBox="0 0 16 16">
<path d="M7.5 0.8C3.8 0.8 0.8 3.3 0.8 6.6C0.8 9.3 2.8 11.3 5.5 12L7 15L8.6 12.2C11.9 11.8 14.3 9.5 14.3 6.6C14.3 3.3 11.3 0.8 7.5 0.8Z" fill="#fff" stroke="#000" stroke-width="1"/>
<rect x="6.5" y="2.2" width="2.4" height="1.8" fill="#1010F0"/>
<path d="M5.2 5.2H8.9V9.6H10V10.8H5.2V9.6H6.4V6.4H5.2Z" fill="#1010F0"/></svg>
<div class="n" style="position:absolute;left:259px;top:313px;font-size:11px;line-height:11px;font-weight:normal;color:#000;transform:scaleX(1.0802);transform-origin:0 0;">Inform...</div>
<div class="n" style="position:absolute;left:315px;top:313px;font-size:11px;line-height:11px;font-weight:normal;color:#000;transform:scaleX(0.9130);transform-origin:0 0;">LIUYU04ESN</div>
<div class="n" style="position:absolute;left:400px;top:313px;font-size:11px;line-height:11px;font-weight:normal;color:#000;transform:scaleX(1.0458);transform-origin:0 0;">11/02/2011 23.14.09</div>
<div class="n" style="position:absolute;left:545px;top:313px;font-size:11px;line-height:11px;font-weight:normal;color:#000;transform:scaleX(0.9447);transform-origin:0 0;">131</div>
<div class="n" style="position:absolute;left:630px;top:313px;font-size:11px;line-height:11px;font-weight:normal;color:#000;transform:scaleX(0.9684);transform-origin:0 0;">Total de volúmenes a los que realizar co 1</div>
<svg style="position:absolute;left:242px;top:326px" width="16" height="16" viewBox="0 0 16 16">
<path d="M7.5 0.8C3.8 0.8 0.8 3.3 0.8 6.6C0.8 9.3 2.8 11.3 5.5 12L7 15L8.6 12.2C11.9 11.8 14.3 9.5 14.3 6.6C14.3 3.3 11.3 0.8 7.5 0.8Z" fill="#fff" stroke="#000" stroke-width="1"/>
<rect x="6.5" y="2.2" width="2.4" height="1.8" fill="#1010F0"/>
<path d="M5.2 5.2H8.9V9.6H10V10.8H5.2V9.6H6.4V6.4H5.2Z" fill="#1010F0"/></svg>
<div class="n" style="position:absolute;left:259px;top:330px;font-size:11px;line-height:11px;font-weight:normal;color:#000;transform:scaleX(1.0802);transform-origin:0 0;">Inform...</div>
<div class="n" style="position:absolute;left:315px;top:330px;font-size:11px;line-height:11px;font-weight:normal;color:#000;transform:scaleX(0.9130);transform-origin:0 0;">LIUYU04ESN</div>
<div class="n" style="position:absolute;left:400px;top:330px;font-size:11px;line-height:11px;font-weight:normal;color:#000;transform:scaleX(1.0458);transform-origin:0 0;">11/02/2011 23.14.09</div>
<div class="n" style="position:absolute;left:545px;top:330px;font-size:11px;line-height:11px;font-weight:normal;color:#000;transform:scaleX(0.9447);transform-origin:0 0;">131</div>
<div class="n" style="position:absolute;left:630px;top:330px;font-size:11px;line-height:11px;font-weight:normal;color:#000;transform:scaleX(1.0373);transform-origin:0 0;">-- Estado de error y cancelado......... 0</div>
<svg style="position:absolute;left:242px;top:343px" width="16" height="16" viewBox="0 0 16 16">
<path d="M7.5 0.8C3.8 0.8 0.8 3.3 0.8 6.6C0.8 9.3 2.8 11.3 5.5 12L7 15L8.6 12.2C11.9 11.8 14.3 9.5 14.3 6.6C14.3 3.3 11.3 0.8 7.5 0.8Z" fill="#fff" stroke="#000" stroke-width="1"/>
<rect x="6.5" y="2.2" width="2.4" height="1.8" fill="#1010F0"/>
<path d="M5.2 5.2H8.9V9.6H10V10.8H5.2V9.6H6.4V6.4H5.2Z" fill="#1010F0"/></svg>
<div class="n" style="position:absolute;left:259px;top:347px;font-size:11px;line-height:11px;font-weight:normal;color:#000;transform:scaleX(1.0802);transform-origin:0 0;">Inform...</div>
<div class="n" style="position:absolute;left:315px;top:347px;font-size:11px;line-height:11px;font-weight:normal;color:#000;transform:scaleX(0.9130);transform-origin:0 0;">LIUYU04ESN</div>
<div class="n" style="position:absolute;left:400px;top:347px;font-size:11px;line-height:11px;font-weight:normal;color:#000;transform:scaleX(1.0458);transform-origin:0 0;">11/02/2011 23.14.09</div>
<div class="n" style="position:absolute;left:545px;top:347px;font-size:11px;line-height:11px;font-weight:normal;color:#000;transform:scaleX(0.9447);transform-origin:0 0;">131</div>
<div class="n" style="position:absolute;left:630px;top:347px;font-size:11px;line-height:11px;font-weight:normal;color:#000;transform:scaleX(1.0085);transform-origin:0 0;">-- Estado completo e incompleto........ 1</div>
<svg style="position:absolute;left:242px;top:360px" width="16" height="16" viewBox="0 0 16 16">
<path d="M7.5 0.8C3.8 0.8 0.8 3.3 0.8 6.6C0.8 9.3 2.8 11.3 5.5 12L7 15L8.6 12.2C11.9 11.8 14.3 9.5 14.3 6.6C14.3 3.3 11.3 0.8 7.5 0.8Z" fill="#fff" stroke="#000" stroke-width="1"/>
<rect x="6.5" y="2.2" width="2.4" height="1.8" fill="#1010F0"/>
<path d="M5.2 5.2H8.9V9.6H10V10.8H5.2V9.6H6.4V6.4H5.2Z" fill="#1010F0"/></svg>
<div class="n" style="position:absolute;left:259px;top:364px;font-size:11px;line-height:11px;font-weight:normal;color:#000;transform:scaleX(1.0802);transform-origin:0 0;">Inform...</div>
<div class="n" style="position:absolute;left:315px;top:364px;font-size:11px;line-height:11px;font-weight:normal;color:#000;transform:scaleX(0.9130);transform-origin:0 0;">LIUYU04ESN</div>
<div class="n" style="position:absolute;left:400px;top:364px;font-size:11px;line-height:11px;font-weight:normal;color:#000;transform:scaleX(1.0458);transform-origin:0 0;">11/02/2011 23.14.09</div>
<div class="n" style="position:absolute;left:545px;top:364px;font-size:11px;line-height:11px;font-weight:normal;color:#000;transform:scaleX(0.9447);transform-origin:0 0;">131</div>
<div class="n" style="position:absolute;left:630px;top:364px;font-size:11px;line-height:11px;font-weight:normal;color:#000;transform:scaleX(0.9724);transform-origin:0 0;">Total de nodos a los que realizar copia 1</div>
<svg style="position:absolute;left:242px;top:377px" width="16" height="16" viewBox="0 0 16 16">
<path d="M7.5 0.8C3.8 0.8 0.8 3.3 0.8 6.6C0.8 9.3 2.8 11.3 5.5 12L7 15L8.6 12.2C11.9 11.8 14.3 9.5 14.3 6.6C14.3 3.3 11.3 0.8 7.5 0.8Z" fill="#fff" stroke="#000" stroke-width="1"/>
<rect x="6.5" y="2.2" width="2.4" height="1.8" fill="#1010F0"/>
<path d="M5.2 5.2H8.9V9.6H10V10.8H5.2V9.6H6.4V6.4H5.2Z" fill="#1010F0"/></svg>
<div class="n" style="position:absolute;left:259px;top:381px;font-size:11px;line-height:11px;font-weight:normal;color:#000;transform:scaleX(1.0802);transform-origin:0 0;">Inform...</div>
<div class="n" style="position:absolute;left:315px;top:381px;font-size:11px;line-height:11px;font-weight:normal;color:#000;transform:scaleX(0.9130);transform-origin:0 0;">LIUYU04ESN</div>
<div class="n" style="position:absolute;left:400px;top:381px;font-size:11px;line-height:11px;font-weight:normal;color:#000;transform:scaleX(1.0458);transform-origin:0 0;">11/02/2011 23.14.09</div>
<div class="n" style="position:absolute;left:545px;top:381px;font-size:11px;line-height:11px;font-weight:normal;color:#000;transform:scaleX(0.9447);transform-origin:0 0;">131</div>
<div class="n" style="position:absolute;left:630px;top:381px;font-size:11px;line-height:11px;font-weight:normal;color:#000;transform:scaleX(0.9991);transform-origin:0 0;">Número de errores/advertencias: 1/0</div>
<svg style="position:absolute;left:242px;top:394px" width="16" height="16" viewBox="0 0 16 16">
<path d="M7.5 0.8C3.8 0.8 0.8 3.3 0.8 6.6C0.8 9.3 2.8 11.3 5.5 12L7 15L8.6 12.2C11.9 11.8 14.3 9.5 14.3 6.6C14.3 3.3 11.3 0.8 7.5 0.8Z" fill="#fff" stroke="#000" stroke-width="1"/>
<rect x="6.5" y="2.2" width="2.4" height="1.8" fill="#1010F0"/>
<path d="M5.2 5.2H8.9V9.6H10V10.8H5.2V9.6H6.4V6.4H5.2Z" fill="#1010F0"/></svg>
<div class="n" style="position:absolute;left:259px;top:398px;font-size:11px;line-height:11px;font-weight:normal;color:#000;transform:scaleX(1.0802);transform-origin:0 0;">Inform...</div>
<div class="n" style="position:absolute;left:315px;top:398px;font-size:11px;line-height:11px;font-weight:normal;color:#000;transform:scaleX(0.9130);transform-origin:0 0;">LIUYU04ESN</div>
<div class="n" style="position:absolute;left:400px;top:398px;font-size:11px;line-height:11px;font-weight:normal;color:#000;transform:scaleX(1.0458);transform-origin:0 0;">11/02/2011 23.14.09</div>
<div class="n" style="position:absolute;left:545px;top:398px;font-size:11px;line-height:11px;font-weight:normal;color:#000;transform:scaleX(0.9447);transform-origin:0 0;">131</div>
<div class="n" style="position:absolute;left:630px;top:398px;font-size:11px;line-height:11px;font-weight:normal;color:#000;transform:scaleX(0.9626);transform-origin:0 0;">Rendimiento medio: 3,75 MB/min</div>
<svg style="position:absolute;left:242px;top:411px" width="16" height="16" viewBox="0 0 16 16">
<path d="M7.5 0.8C3.8 0.8 0.8 3.3 0.8 6.6C0.8 9.3 2.8 11.3 5.5 12L7 15L8.6 12.2C11.9 11.8 14.3 9.5 14.3 6.6C14.3 3.3 11.3 0.8 7.5 0.8Z" fill="#fff" stroke="#000" stroke-width="1"/>
<rect x="6.5" y="2.2" width="2.4" height="1.8" fill="#1010F0"/>
<path d="M5.2 5.2H8.9V9.6H10V10.8H5.2V9.6H6.4V6.4H5.2Z" fill="#1010F0"/></svg>
<div class="n" style="position:absolute;left:259px;top:415px;font-size:11px;line-height:11px;font-weight:normal;color:#000;transform:scaleX(1.0802);transform-origin:0 0;">Inform...</div>
<div class="n" style="position:absolute;left:315px;top:415px;font-size:11px;line-height:11px;font-weight:normal;color:#000;transform:scaleX(0.9130);transform-origin:0 0;">LIUYU04ESN</div>
<div class="n" style="position:absolute;left:400px;top:415px;font-size:11px;line-height:11px;font-weight:normal;color:#000;transform:scaleX(1.0458);transform-origin:0 0;">11/02/2011 23.14.09</div>
<div class="n" style="position:absolute;left:545px;top:415px;font-size:11px;line-height:11px;font-weight:normal;color:#000;transform:scaleX(0.9447);transform-origin:0 0;">131</div>
<div class="n" style="position:absolute;left:630px;top:415px;font-size:11px;line-height:11px;font-weight:normal;color:#000;transform:scaleX(0.9812);transform-origin:0 0;">Tiempo transcurrido: 28s</div>
<svg style="position:absolute;left:242px;top:428px" width="16" height="16" viewBox="0 0 16 16">
<path d="M7.5 0.8C3.8 0.8 0.8 3.3 0.8 6.6C0.8 9.3 2.8 11.3 5.5 12L7 15L8.6 12.2C11.9 11.8 14.3 9.5 14.3 6.6C14.3 3.3 11.3 0.8 7.5 0.8Z" fill="#fff" stroke="#000" stroke-width="1"/>
<rect x="6.5" y="2.2" width="2.4" height="1.8" fill="#1010F0"/>
<path d="M5.2 5.2H8.9V9.6H10V10.8H5.2V9.6H6.4V6.4H5.2Z" fill="#1010F0"/></svg>
<div class="n" style="position:absolute;left:259px;top:432px;font-size:11px;line-height:11px;font-weight:normal;color:#000;transform:scaleX(1.0802);transform-origin:0 0;">Inform...</div>
<div class="n" style="position:absolute;left:315px;top:432px;font-size:11px;line-height:11px;font-weight:normal;color:#000;transform:scaleX(0.9130);transform-origin:0 0;">LIUYU04ESN</div>
<div class="n" style="position:absolute;left:400px;top:432px;font-size:11px;line-height:11px;font-weight:normal;color:#000;transform:scaleX(1.0458);transform-origin:0 0;">11/02/2011 23.14.09</div>
<div class="n" style="position:absolute;left:545px;top:432px;font-size:11px;line-height:11px;font-weight:normal;color:#000;transform:scaleX(0.9447);transform-origin:0 0;">131</div>
<div class="n" style="position:absolute;left:630px;top:432px;font-size:11px;line-height:11px;font-weight:normal;color:#000;transform:scaleX(0.9668);transform-origin:0 0;">64,00 KB cintas escritas en el medio.</div>
<svg style="position:absolute;left:242px;top:445px" width="16" height="16" viewBox="0 0 16 16">
<path d="M7.5 0.8C3.8 0.8 0.8 3.3 0.8 6.6C0.8 9.3 2.8 11.3 5.5 12L7 15L8.6 12.2C11.9 11.8 14.3 9.5 14.3 6.6C14.3 3.3 11.3 0.8 7.5 0.8Z" fill="#fff" stroke="#000" stroke-width="1"/>
<rect x="6.5" y="2.2" width="2.4" height="1.8" fill="#1010F0"/>
<path d="M5.2 5.2H8.9V9.6H10V10.8H5.2V9.6H6.4V6.4H5.2Z" fill="#1010F0"/></svg>
<div class="n" style="position:absolute;left:259px;top:449px;font-size:11px;line-height:11px;font-weight:normal;color:#000;transform:scaleX(1.0802);transform-origin:0 0;">Inform...</div>
<div class="n" style="position:absolute;left:315px;top:449px;font-size:11px;line-height:11px;font-weight:normal;color:#000;transform:scaleX(0.9130);transform-origin:0 0;">LIUYU04ESN</div>
<div class="n" style="position:absolute;left:400px;top:449px;font-size:11px;line-height:11px;font-weight:normal;color:#000;transform:scaleX(1.0458);transform-origin:0 0;">11/02/2011 23.14.09</div>
<div class="n" style="position:absolute;left:545px;top:449px;font-size:11px;line-height:11px;font-weight:normal;color:#000;transform:scaleX(0.9447);transform-origin:0 0;">131</div>
<div class="n" style="position:absolute;left:630px;top:449px;font-size:11px;line-height:11px;font-weight:normal;color:#000;transform:scaleX(0.9605);transform-origin:0 0;">1 sesiones.</div>
<svg style="position:absolute;left:242px;top:462px" width="16" height="16" viewBox="0 0 16 16">
<path d="M7.5 0.8C3.8 0.8 0.8 3.3 0.8 6.6C0.8 9.3 2.8 11.3 5.5 12L7 15L8.6 12.2C11.9 11.8 14.3 9.5 14.3 6.6C14.3 3.3 11.3 0.8 7.5 0.8Z" fill="#fff" stroke="#000" stroke-width="1"/>
<rect x="6.5" y="2.2" width="2.4" height="1.8" fill="#1010F0"/>
<path d="M5.2 5.2H8.9V9.6H10V10.8H5.2V9.6H6.4V6.4H5.2Z" fill="#1010F0"/></svg>
<div class="n" style="position:absolute;left:259px;top:466px;font-size:11px;line-height:11px;font-weight:normal;color:#000;transform:scaleX(1.0802);transform-origin:0 0;">Inform...</div>
<div class="n" style="position:absolute;left:315px;top:466px;font-size:11px;line-height:11px;font-weight:normal;color:#000;transform:scaleX(0.9130);transform-origin:0 0;">LIUYU04ESN</div>
<div class="n" style="position:absolute;left:400px;top:466px;font-size:11px;line-height:11px;font-weight:normal;color:#000;transform:scaleX(1.0458);transform-origin:0 0;">11/02/2011 23.14.09</div>
<div class="n" style="position:absolute;left:545px;top:466px;font-size:11px;line-height:11px;font-weight:normal;color:#000;transform:scaleX(0.9447);transform-origin:0 0;">131</div>
<div class="n" style="position:absolute;left:630px;top:466px;font-size:11px;line-height:11px;font-weight:normal;color:#000;transform:scaleX(1.0177);transform-origin:0 0;">** Resumen para tarea principal **</div>
<svg style="position:absolute;left:242px;top:479px" width="16" height="16" viewBox="0 0 16 16">
<path d="M7.5 0.8C3.8 0.8 0.8 3.3 0.8 6.6C0.8 9.3 2.8 11.3 5.5 12L7 15L8.6 12.2C11.9 11.8 14.3 9.5 14.3 6.6C14.3 3.3 11.3 0.8 7.5 0.8Z" fill="#fff" stroke="#000" stroke-width="1"/>
<rect x="6.5" y="2.2" width="2.4" height="1.8" fill="#1010F0"/>
<path d="M5.2 5.2H8.9V9.6H10V10.8H5.2V9.6H6.4V6.4H5.2Z" fill="#1010F0"/></svg>
<div class="n" style="position:absolute;left:259px;top:483px;font-size:11px;line-height:11px;font-weight:normal;color:#000;transform:scaleX(1.0802);transform-origin:0 0;">Inform...</div>
<div class="n" style="position:absolute;left:315px;top:483px;font-size:11px;line-height:11px;font-weight:normal;color:#000;transform:scaleX(0.9130);transform-origin:0 0;">LIUYU04ESN</div>
<div class="n" style="position:absolute;left:400px;top:483px;font-size:11px;line-height:11px;font-weight:normal;color:#000;transform:scaleX(1.0458);transform-origin:0 0;">11/02/2011 23.14.09</div>
<div class="n" style="position:absolute;left:545px;top:483px;font-size:11px;line-height:11px;font-weight:normal;color:#000;transform:scaleX(0.9447);transform-origin:0 0;">131</div>
<div class="n" style="position:absolute;left:630px;top:483px;font-size:11px;line-height:11px;font-weight:normal;color:#000;transform:scaleX(0.9991);transform-origin:0 0;">Número de errores/advertencias: 1/0</div>
<svg style="position:absolute;left:242px;top:496px" width="16" height="16" viewBox="0 0 16 16">
<path d="M7.5 0.8C3.8 0.8 0.8 3.3 0.8 6.6C0.8 9.3 2.8 11.3 5.5 12L7 15L8.6 12.2C11.9 11.8 14.3 9.5 14.3 6.6C14.3 3.3 11.3 0.8 7.5 0.8Z" fill="#fff" stroke="#000" stroke-width="1"/>
<rect x="6.5" y="2.2" width="2.4" height="1.8" fill="#1010F0"/>
<path d="M5.2 5.2H8.9V9.6H10V10.8H5.2V9.6H6.4V6.4H5.2Z" fill="#1010F0"/></svg>
<div class="n" style="position:absolute;left:259px;top:500px;font-size:11px;line-height:11px;font-weight:normal;color:#000;transform:scaleX(1.0802);transform-origin:0 0;">Inform...</div>
<div class="n" style="position:absolute;left:315px;top:500px;font-size:11px;line-height:11px;font-weight:normal;color:#000;transform:scaleX(0.9130);transform-origin:0 0;">LIUYU04ESN</div>
<div class="n" style="position:absolute;left:400px;top:500px;font-size:11px;line-height:11px;font-weight:normal;color:#000;transform:scaleX(1.0458);transform-origin:0 0;">11/02/2011 23.14.09</div>
<div class="n" style="position:absolute;left:545px;top:500px;font-size:11px;line-height:11px;font-weight:normal;color:#000;transform:scaleX(0.9447);transform-origin:0 0;">131</div>
<div class="n" style="position:absolute;left:630px;top:500px;font-size:11px;line-height:11px;font-weight:normal;color:#000;transform:scaleX(0.9626);transform-origin:0 0;">Rendimiento medio: 3,75 MB/min</div>
<svg style="position:absolute;left:242px;top:513px" width="16" height="16" viewBox="0 0 16 16">
<path d="M7.5 0.8C3.8 0.8 0.8 3.3 0.8 6.6C0.8 9.3 2.8 11.3 5.5 12L7 15L8.6 12.2C11.9 11.8 14.3 9.5 14.3 6.6C14.3 3.3 11.3 0.8 7.5 0.8Z" fill="#fff" stroke="#000" stroke-width="1"/>
<rect x="6.5" y="2.2" width="2.4" height="1.8" fill="#1010F0"/>
<path d="M5.2 5.2H8.9V9.6H10V10.8H5.2V9.6H6.4V6.4H5.2Z" fill="#1010F0"/></svg>
<div class="n" style="position:absolute;left:259px;top:517px;font-size:11px;line-height:11px;font-weight:normal;color:#000;transform:scaleX(1.0802);transform-origin:0 0;">Inform...</div>
<div class="n" style="position:absolute;left:315px;top:517px;font-size:11px;line-height:11px;font-weight:normal;color:#000;transform:scaleX(0.9130);transform-origin:0 0;">LIUYU04ESN</div>
<div class="n" style="position:absolute;left:400px;top:517px;font-size:11px;line-height:11px;font-weight:normal;color:#000;transform:scaleX(1.0458);transform-origin:0 0;">11/02/2011 23.14.09</div>
<div class="n" style="position:absolute;left:545px;top:517px;font-size:11px;line-height:11px;font-weight:normal;color:#000;transform:scaleX(0.9447);transform-origin:0 0;">131</div>
<div class="n" style="position:absolute;left:630px;top:517px;font-size:11px;line-height:11px;font-weight:normal;color:#000;transform:scaleX(0.9848);transform-origin:0 0;">Tiempo transcurrido: 5s</div>
<svg style="position:absolute;left:242px;top:530px" width="16" height="16" viewBox="0 0 16 16">
<path d="M7.5 0.8C3.8 0.8 0.8 3.3 0.8 6.6C0.8 9.3 2.8 11.3 5.5 12L7 15L8.6 12.2C11.9 11.8 14.3 9.5 14.3 6.6C14.3 3.3 11.3 0.8 7.5 0.8Z" fill="#fff" stroke="#000" stroke-width="1"/>
<rect x="6.5" y="2.2" width="2.4" height="1.8" fill="#1010F0"/>
<path d="M5.2 5.2H8.9V9.6H10V10.8H5.2V9.6H6.4V6.4H5.2Z" fill="#1010F0"/></svg>
<div class="n" style="position:absolute;left:259px;top:534px;font-size:11px;line-height:11px;font-weight:normal;color:#000;transform:scaleX(1.0802);transform-origin:0 0;">Inform...</div>
<div class="n" style="position:absolute;left:315px;top:534px;font-size:11px;line-height:11px;font-weight:normal;color:#000;transform:scaleX(0.9130);transform-origin:0 0;">LIUYU04ESN</div>
<div class="n" style="position:absolute;left:400px;top:534px;font-size:11px;line-height:11px;font-weight:normal;color:#000;transform:scaleX(1.0458);transform-origin:0 0;">11/02/2011 23.14.09</div>
<div class="n" style="position:absolute;left:545px;top:534px;font-size:11px;line-height:11px;font-weight:normal;color:#000;transform:scaleX(0.9447);transform-origin:0 0;">131</div>
<div class="n" style="position:absolute;left:630px;top:534px;font-size:11px;line-height:11px;font-weight:normal;color:#000;transform:scaleX(0.9605);transform-origin:0 0;">1 sesiones.</div>
<svg style="position:absolute;left:242px;top:547px" width="16" height="16" viewBox="0 0 16 16">
<path d="M7.5 0.8C3.8 0.8 0.8 3.3 0.8 6.6C0.8 9.3 2.8 11.3 5.5 12L7 15L8.6 12.2C11.9 11.8 14.3 9.5 14.3 6.6C14.3 3.3 11.3 0.8 7.5 0.8Z" fill="#fff" stroke="#000" stroke-width="1"/>
<rect x="6.5" y="2.2" width="2.4" height="1.8" fill="#1010F0"/>
<path d="M5.2 5.2H8.9V9.6H10V10.8H5.2V9.6H6.4V6.4H5.2Z" fill="#1010F0"/></svg>
<div class="n" style="position:absolute;left:259px;top:551px;font-size:11px;line-height:11px;font-weight:normal;color:#000;transform:scaleX(1.0802);transform-origin:0 0;">Inform...</div>
<div class="n" style="position:absolute;left:315px;top:551px;font-size:11px;line-height:11px;font-weight:normal;color:#000;transform:scaleX(0.9130);transform-origin:0 0;">LIUYU04ESN</div>
<div class="n" style="position:absolute;left:400px;top:551px;font-size:11px;line-height:11px;font-weight:normal;color:#000;transform:scaleX(1.0458);transform-origin:0 0;">11/02/2011 23.14.09</div>
<div class="n" style="position:absolute;left:545px;top:551px;font-size:11px;line-height:11px;font-weight:normal;color:#000;transform:scaleX(0.9447);transform-origin:0 0;">131</div>
<div class="n" style="position:absolute;left:630px;top:551px;font-size:11px;line-height:11px;font-weight:normal;color:#000;transform:scaleX(1.0165);transform-origin:0 0;">** Resumen para subtarea núm. 1 (ID de tarea 132) **</div>
<svg style="position:absolute;left:242px;top:564px" width="16" height="16" viewBox="0 0 16 16">
<path d="M7.5 0.8C3.8 0.8 0.8 3.3 0.8 6.6C0.8 9.3 2.8 11.3 5.5 12L7 15L8.6 12.2C11.9 11.8 14.3 9.5 14.3 6.6C14.3 3.3 11.3 0.8 7.5 0.8Z" fill="#fff" stroke="#000" stroke-width="1"/>
<rect x="6.5" y="2.2" width="2.4" height="1.8" fill="#1010F0"/>
<path d="M5.2 5.2H8.9V9.6H10V10.8H5.2V9.6H6.4V6.4H5.2Z" fill="#1010F0"/></svg>
<div class="n" style="position:absolute;left:259px;top:568px;font-size:11px;line-height:11px;font-weight:normal;color:#000;transform:scaleX(1.0802);transform-origin:0 0;">Inform...</div>
<div class="n" style="position:absolute;left:315px;top:568px;font-size:11px;line-height:11px;font-weight:normal;color:#000;transform:scaleX(0.9130);transform-origin:0 0;">LIUYU04ESN</div>
<div class="n" style="position:absolute;left:400px;top:568px;font-size:11px;line-height:11px;font-weight:normal;color:#000;transform:scaleX(1.0458);transform-origin:0 0;">11/02/2011 23.13.52</div>
<div class="n" style="position:absolute;left:545px;top:568px;font-size:11px;line-height:11px;font-weight:normal;color:#000;transform:scaleX(0.9447);transform-origin:0 0;">131</div>
<div class="n" style="position:absolute;left:630px;top:568px;font-size:11px;line-height:11px;font-weight:normal;color:#000;transform:scaleX(0.9759);transform-origin:0 0;">Operación Archivo de archivado realizada correctamente. (nombre de nodo = LIUYU04ESN)</div>
<svg style="position:absolute;left:242px;top:581px" width="16" height="16" viewBox="0 0 16 16">
<path d="M7.5 0.8C3.8 0.8 0.8 3.3 0.8 6.6C0.8 9.3 2.8 11.3 5.5 12L7 15L8.6 12.2C11.9 11.8 14.3 9.5 14.3 6.6C14.3 3.3 11.3 0.8 7.5 0.8Z" fill="#fff" stroke="#000" stroke-width="1"/>
<rect x="6.5" y="2.2" width="2.4" height="1.8" fill="#1010F0"/>
<path d="M5.2 5.2H8.9V9.6H10V10.8H5.2V9.6H6.4V6.4H5.2Z" fill="#1010F0"/></svg>
<div class="n" style="position:absolute;left:259px;top:585px;font-size:11px;line-height:11px;font-weight:normal;color:#000;transform:scaleX(1.0802);transform-origin:0 0;">Inform...</div>
<div class="n" style="position:absolute;left:315px;top:585px;font-size:11px;line-height:11px;font-weight:normal;color:#000;transform:scaleX(0.9130);transform-origin:0 0;">LIUYU04ESN</div>
<div class="n" style="position:absolute;left:400px;top:585px;font-size:11px;line-height:11px;font-weight:normal;color:#000;transform:scaleX(1.0458);transform-origin:0 0;">11/02/2011 23.13.47</div>
<div class="n" style="position:absolute;left:545px;top:585px;font-size:11px;line-height:11px;font-weight:normal;color:#000;transform:scaleX(0.9447);transform-origin:0 0;">131</div>
<div class="n" style="position:absolute;left:630px;top:585px;font-size:11px;line-height:11px;font-weight:normal;color:#000;transform:scaleX(0.9733);transform-origin:0 0;">Inicio de operación Archivo de archivado. (nombre de nodo = LIUYU04ESN)</div>
</div>
<div style="position:absolute;left:1128px;top:0px;width:15px;height:587px;background:#D4D0C8"></div>
<div style="position:absolute;left:1128px;top:59px;width:14px;height:1px;background:#000"></div>
<div style="position:absolute;left:1128px;top:90px;width:10px;height:1px;background:#fff"></div>
<div style="position:absolute;left:1128px;top:91px;width:9px;height:27px;background:#6BA3D0"></div>
<div style="position:absolute;left:1128px;top:118px;width:9px;height:1px;background:#000"></div>
<div style="position:absolute;left:1110px;top:92px;width:18px;height:28px;overflow:hidden"><svg style="position:absolute;left:10px;top:8.5px" width="16" height="17" viewBox="0 0 16 17">
<defs><radialGradient id="cga" cx="35%" cy="30%" r="75%"><stop offset="0" stop-color="#FFFFFF"/><stop offset="0.65" stop-color="#ECECEC"/><stop offset="1" stop-color="#A8A8A8"/></radialGradient></defs>
<ellipse cx="8" cy="8.5" rx="7" ry="8" fill="url(#cga)"/>
<path d="M4.8 4.5L7.8 6.8L9.8 5M4.8 8.5L7.8 10.8L9.8 9M4.8 12.5L7.8 14.8L9.8 13" fill="none" stroke="#0A30B8" stroke-width="1.7"/></svg></div>
<div style="position:absolute;left:1128px;top:91px;width:9px;height:27px;overflow:hidden"><svg style="position:absolute;left:-8px;top:4.5px" width="16" height="17" viewBox="0 0 16 17">
<defs><radialGradient id="cgb" cx="35%" cy="30%" r="75%"><stop offset="0" stop-color="#FFFFFF"/><stop offset="0.65" stop-color="#ECECEC"/><stop offset="1" stop-color="#A8A8A8"/></radialGradient></defs>
<ellipse cx="8" cy="8.5" rx="7" ry="8" fill="url(#cgb)"/>
<path d="M4.8 4.5L7.8 6.8L9.8 5M4.8 8.5L7.8 10.8L9.8 9M4.8 12.5L7.8 14.8L9.8 13" fill="none" stroke="#0A30B8" stroke-width="1.7"/></svg></div>
<div style="position:absolute;left:1128px;top:135px;width:9px;height:1px;background:#404040"></div>
<div style="position:absolute;left:1128px;top:136px;width:9px;height:198px;background:#fff"></div>
<div style="position:absolute;left:1128px;top:334px;width:9px;height:5px;background:#fff;border-top:1px solid #D4D0C8"></div>
<div style="position:absolute;left:1128px;top:339px;width:9px;height:1px;background:#000"></div>
<div style="position:absolute;left:1128px;top:340px;width:9px;height:16px;background:#D4D0C8;border-right:1px solid #404040;border-bottom:1px solid #404040;box-shadow:inset -1px -1px 0 #808080"></div>
<div style="position:absolute;left:1128px;top:356px;width:9px;height:231px;background-color:#fff;background-image:repeating-conic-gradient(#D4D0C8 0 25%,#fff 0 50%);background-size:2px 2px"></div>
<div style="position:absolute;left:1137px;top:90px;width:1px;height:497px;background:#fff"></div>
<div style="position:absolute;left:1140px;top:90px;width:1px;height:497px;background:#808080"></div>
<div style="position:absolute;left:1141px;top:90px;width:1px;height:497px;background:#404040"></div>
</div></body></html>
